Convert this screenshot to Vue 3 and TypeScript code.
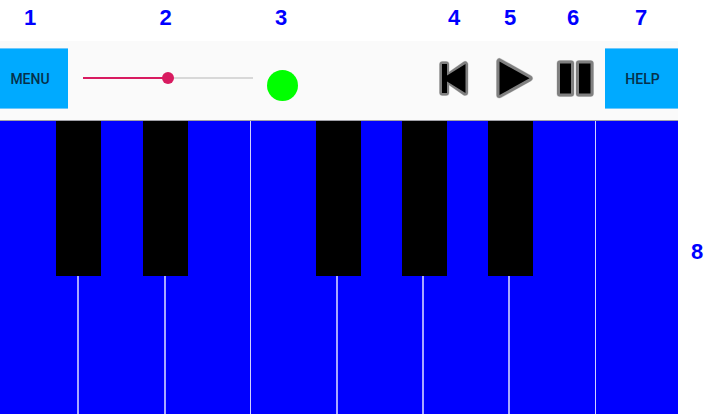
<script setup lang="ts">
import { ref } from 'vue'

interface PianoKey {
  note: string
  span: number
  group: 'low' | 'high'
  sharp?: string
}

const position = ref<number>(50)
const topMarks: string[] = ['1', '2', '3', '4', '5', '6', '7']

const keys: PianoKey[] = [
  { note: 'C', span: 79, group: 'low', sharp: 'C sharp' },
  { note: 'D', span: 87, group: 'low', sharp: 'D sharp' },
  { note: 'E', span: 85, group: 'low' },
  { note: 'F', span: 87, group: 'high', sharp: 'F sharp' },
  { note: 'G', span: 86, group: 'high', sharp: 'G sharp' },
  { note: 'A', span: 86, group: 'high', sharp: 'A sharp' },
  { note: 'B', span: 86, group: 'high' },
  { note: 'High C', span: 82, group: 'high' },
]
</script>

<template>
  <main class="page">
    <div class="marks">
      <span v-for="mark in topMarks" :key="mark" class="mark" :class="'mark-' + mark">{{ mark }}</span>
    </div>

    <div class="body">
      <section class="app">
        <header class="toolbar">
          <button type="button" class="action menu">MENU</button>
          <input
            v-model.number="position"
            class="slider"
            type="range"
            min="0"
            max="100"
            aria-label="Position"
            :style="{ '--fill': position + '%' }"
          />
          <span class="status"></span>

          <div class="transport">
            <button type="button" class="icon" aria-label="Previous">
              <svg viewBox="0 0 44 44" width="44" height="44">
                <g class="halo">
                  <path d="M10.5 8.5H14V36.5H10.5Z" />
                  <path d="M33 8.5V36.5L13 22.5Z" />
                </g>
                <g class="rim">
                  <path d="M10.5 8.5H14V36.5H10.5Z" />
                  <path d="M33 8.5V36.5L13 22.5Z" />
                </g>
                <path d="M10 8H15V19.5L33.5 8V37L15 25.5V37H10Z" />
              </svg>
            </button>
            <button type="button" class="icon" aria-label="Play">
              <svg viewBox="0 0 44 44" width="44" height="44">
                <path class="halo" d="M7.5 5.5V39L37.5 22.3Z" />
                <path class="rim" d="M7.5 5.5V39L37.5 22.3Z" />
                <path d="M7.5 5.5V39L37.5 22.3Z" />
              </svg>
            </button>
            <button type="button" class="icon" aria-label="Pause">
              <svg viewBox="0 0 44 44" width="44" height="44">
                <path class="halo" d="M8 7.5H19V37.5H8ZM27 7.5H38.5V37.5H27Z" />
                <path class="rim" d="M8 7.5H19V37.5H8ZM27 7.5H38.5V37.5H27Z" />
                <path d="M8 7.5H19V37.5H8ZM27 7.5H38.5V37.5H27Z" />
              </svg>
            </button>
          </div>

          <button type="button" class="action help">HELP</button>
        </header>

        <div class="keyboard">
          <div
            v-for="key in keys"
            :key="key.note"
            class="slot"
            :class="[key.group, { shared: key.sharp }]"
            :style="{ flexGrow: key.span }"
          >
            <button type="button" class="white" :aria-label="key.note"></button>
            <button v-if="key.sharp" type="button" class="black" :aria-label="key.sharp"></button>
          </div>
        </div>
      </section>

      <aside class="side"><span class="mark">8</span></aside>
    </div>
  </main>
</template>

<style>
body {
  margin: 0;
  background: #fff;
}
</style>

<style scoped>
.page {
  display: flex;
  flex-direction: column;
  min-height: 100vh;
  background: #fff;
  font-family: 'Liberation Sans', Arial, sans-serif;
}

button {
  margin: 0;
  padding: 0;
  border: 0;
  border-radius: 0;
  cursor: pointer;
}

.marks {
  display: grid;
  grid-template-columns: 60px 211px 20px 1fr 56px 56px 70px 66px 42px;
  align-items: center;
  height: 41px;
  padding-bottom: 5px;
  box-sizing: border-box;
}

.mark {
  color: #0000ff;
  font-size: 22px;
  font-weight: 700;
  line-height: 24px;
  text-align: center;
}

.mark-4 {
  grid-column: 5;
}

.body {
  display: flex;
  flex: 1;
}

.app {
  display: flex;
  flex: 1;
  flex-direction: column;
  min-width: 0;
  overflow: hidden;
}

.toolbar {
  display: flex;
  align-items: center;
  padding: 7px 0 11px;
  border-bottom: 1px solid #a0a0a8;
  background: #fafafa;
}

.action {
  height: 61px;
  border-top: 1px solid #6cc8fc;
  border-bottom: 1px solid #6cc8fc;
  background: #00aaff;
  color: #06304a;
  font-family: Roboto, sans-serif;
  font-size: 14px;
  font-weight: 500;
}

.menu {
  width: 68px;
  padding-right: 8px;
}

.help {
  width: 73px;
  padding-left: 2px;
}

.slider {
  width: 170px;
  height: 12px;
  margin: 0 14px 1px 15px;
  appearance: none;
  background:
    linear-gradient(to right, #d81b60 var(--fill), #d8d8d8 var(--fill)) center / 100% 2px no-repeat;
}

.slider::-webkit-slider-thumb {
  width: 12px;
  height: 12px;
  border-radius: 50%;
  appearance: none;
  background: #d81b60;
}

.status {
  align-self: flex-end;
  width: 31px;
  height: 31px;
  margin-bottom: 8px;
  border-radius: 50%;
  background: #00ff00;
}

.transport {
  display: flex;
  gap: 16px;
  margin-left: auto;
  padding: 0 9px 1px 0;
}

.icon {
  display: flex;
  background: none;
}

.halo,
.rim {
  stroke: #808080;
  stroke-linejoin: round;
  stroke-width: 6;
}

.halo {
  stroke: #d4d4d4;
  stroke-width: 7;
}

.keyboard {
  display: flex;
  flex: 1;
  min-height: 240px;
  background: #0000ff;
}

.slot {
  position: relative;
  display: flex;
  flex-basis: 0;
  box-sizing: border-box;
}

.white {
  flex: 1;
  border-right: 1px solid #d0d0ff;
  background: #0000ff;
}

.shared .white {
  border-right: 2px solid #a8a8ff;
}

.slot:last-child .white {
  border-right: 0;
}

.black {
  position: absolute;
  z-index: 1;
  top: 0;
  width: 45px;
  height: 53%;
  background: #000;
}

.low .black {
  right: -22px;
}

.high .black {
  right: -23px;
}

.side {
  display: flex;
  align-items: center;
  justify-content: center;
  width: 38px;
  padding-top: 48px;
}
</style>
